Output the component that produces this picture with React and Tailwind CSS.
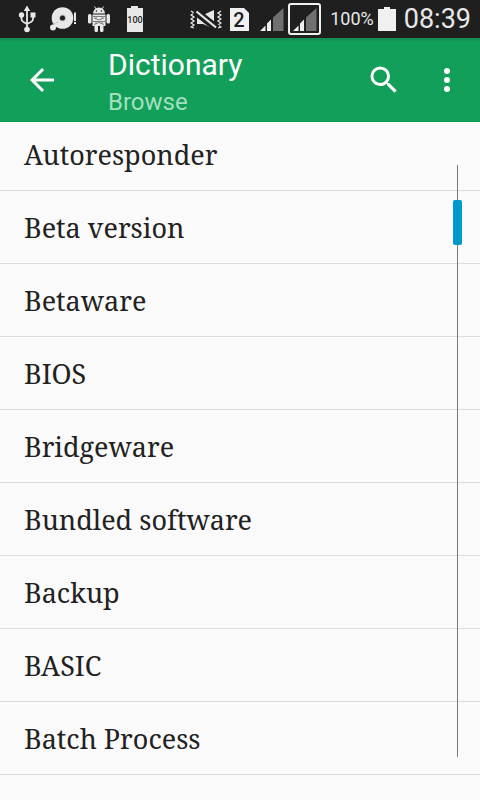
import React from "react";

const entries = [
  "Autoresponder",
  "Beta version",
  "Betaware",
  "BIOS",
  "Bridgeware",
  "Bundled software",
  "Backup",
  "BASIC",
  "Batch Process",
];

function UsbIcon() {
  return (
    <svg width="18" height="28" viewBox="0 0 18 28" fill="none" stroke="#e8e8e8" strokeWidth="1.8" aria-hidden="true">
      <path d="M9 5v18M3.500 11v3q0 2 2 3l3.500 2M15 11v3q0 2-2 3l-4 2" />
      <path d="M9 0.500l3.200 5.500h-6.400z" fill="#e8e8e8" stroke="none" />
      <circle cx="9" cy="24.500" r="2.800" fill="#e8e8e8" stroke="none" />
      <circle cx="3.500" cy="10" r="2.700" fill="#e8e8e8" stroke="none" />
      <path d="M12.500 7.500h5v5h-5z" fill="#e8e8e8" stroke="none" />
    </svg>
  );
}

function DiscIcon() {
  return (
    <svg width="28" height="24" viewBox="0 0 28 24" aria-hidden="true">
      <circle cx="12.500" cy="11" r="10.800" fill="#e8e8e8" />
      <circle cx="12.500" cy="11" r="3.500" fill="#c4c4c4" />
      <circle cx="12.500" cy="11" r="2.500" fill="#1f1f1f" />
      <path d="M0.500 20.500l7-5" stroke="#1f1f1f" strokeWidth="1.500" />
      <circle cx="3" cy="20.500" r="3" fill="#e8e8e8" />
      <path d="M3 20l5-4" stroke="#e8e8e8" strokeWidth="3" />
      <path d="M24 5.500h2v8.500h-2zM24 15h2v2h-2z" fill="#e8e8e8" />
    </svg>
  );
}

function AndroidIcon() {
  return (
    <svg width="22" height="26" viewBox="0 0 22 26" fill="#e8e8e8" aria-hidden="true">
      <path d="M5 7.500a6 6 0 0 1 12 0zM4.500 8.500h13V20h-13z" />
      <path d="M6.500 0.500l2 3M15.500 0.500l-2 3" stroke="#e8e8e8" />
      <rect x="0" y="8" width="3.500" height="9.500" rx="1.500" />
      <rect x="18.500" y="8" width="3.500" height="9.500" rx="1.500" />
      <rect x="6.500" y="18" width="3.500" height="8" rx="1.500" />
      <rect x="12" y="18" width="3.500" height="8" rx="1.500" />
      <path d="M5 10.500h12M6 12l5 2 5-2M5 15.500h12M6 18.500l5-2 5 2M8 10v3M14 10v3M8 15v3M14 15v3" fill="none" stroke="#808080" />
      <circle cx="8.500" cy="5" r="0.800" fill="#1f1f1f" />
      <circle cx="13.500" cy="5" r="0.800" fill="#1f1f1f" />
    </svg>
  );
}

function BatteryFullIcon() {
  return (
    <svg width="18" height="26" viewBox="0 0 18 26" aria-hidden="true">
      <path d="M5 0h7v2h5v24H1V2h4z" fill="#e8e8e8" />
      <text x="9" y="17" textAnchor="middle" fontSize="9" fontWeight="500" fill="#1f1f1f" className="font-['Roboto',sans-serif]">
        100
      </text>
    </svg>
  );
}

function VibrateIcon() {
  return (
    <svg width="32" height="22" viewBox="0 0 32 22" fill="none" stroke="#e8e8e8" aria-hidden="true">
      <path d="M1 3l3 2-3 2 3 2-3 2 3 2-3 2 3 2-3 2 3 1" strokeWidth="1.300" />
      <path d="M31 3l-3 2 3 2-3 2 3 2-3 2 3 2-3 2 3 2-3 1" strokeWidth="1.300" />
      <path d="M7 6v10h6l11 5V2l-11 5z" fill="#e8e8e8" stroke="none" />
      <path d="M5 3l22 17.500" stroke="#1f1f1f" strokeWidth="7.500" />
      <path d="M6.500 3.500l19.500 16" strokeWidth="2.200" />
    </svg>
  );
}

function SimIcon() {
  return (
    <svg width="19" height="24" viewBox="0 0 19 24" aria-hidden="true">
      <path d="M0 1h14l5 5v18H0z" fill="#f0f0f0" />
      <text x="9" y="20" textAnchor="middle" fontSize="20" fontWeight="500" fill="#1f1f1f" className="font-['Roboto',sans-serif]">
        2
      </text>
    </svg>
  );
}

function SignalIcon() {
  return (
    <svg width="24" height="24" viewBox="0 0 24 24" aria-hidden="true">
      <path d="M13 10.500L23.500 1v23H13z" fill="#707070" />
      <path d="M0 24l5.500-5.500V24zM7 24v-7.500l4-4V24z" fill="#f0f0f0" />
    </svg>
  );
}

function StatusBar() {
  return (
    <div className="flex h-[38px] shrink-0 items-center justify-between bg-[#1f1f1f] font-['Roboto',sans-serif] text-[#e8e8e8]">
      <div className="flex items-center gap-[14px] pl-[18px]">
        <UsbIcon />
        <div className="flex items-center gap-[10px]">
          <DiscIcon />
          <AndroidIcon />
        </div>
        <div className="pl-0.5">
          <BatteryFullIcon />
        </div>
      </div>
      <div className="flex items-center pr-[9px]">
        <VibrateIcon />
        <div className="ml-2">
          <SimIcon />
        </div>
        <div className="ml-[11px]">
          <SignalIcon />
        </div>
        <div className="ml-1 flex h-8 w-[33px] items-center justify-center rounded-[3px] border-2 border-[#f0f0f0]">
          <SignalIcon />
        </div>
        <span className="ml-[9px] text-lg leading-6">100%</span>
        <svg className="ml-1" width="18" height="24" viewBox="0 0 18 24" fill="#f0f0f0" aria-hidden="true">
          <path d="M6 0h6v2h6v22H0V2h6z" />
        </svg>
        <span className="ml-2 text-[27px] leading-8">08:39</span>
      </div>
    </div>
  );
}

function AppBar() {
  return (
    <header className="flex h-[84px] shrink-0 items-center bg-[#129f59] bg-linear-to-b from-[#168a52] from-0% to-[#129f59] to-5% font-['Roboto',sans-serif] text-white">
      <button type="button" aria-label="Back" className="flex w-[84px] justify-center">
        <svg width="36" height="36" viewBox="0 0 24 24" fill="currentColor" aria-hidden="true">
          <path d="M20 11H7.830l5.590-5.590L12 4l-8 8 8 8 1.410-1.410L7.830 13H20v-2z" />
        </svg>
      </button>
      <div className="min-w-0 flex-1 pt-1 pl-6">
        <h1 className="text-[30px] leading-10">Dictionary</h1>
        <p className="text-2xl leading-[34px] text-[#a3dfbf]">Browse</p>
      </div>
      <button type="button" aria-label="Search" className="flex w-[60px] justify-center">
        <svg width="36" height="36" viewBox="0 0 24 24" fill="currentColor" aria-hidden="true">
          <path d="M15.500 14h-.790l-.280-.270A6.471 6.471 0 0 0 16 9.500 6.500 6.500 0 1 0 9.500 16c1.610 0 3.090-.590 4.230-1.570l.270.280v.790l5 4.990L20.490 19l-4.990-5zm-6 0C7.010 14 5 11.990 5 9.500S7.010 5 9.500 5 14 7.010 14 9.500 11.990 14 9.500 14z" />
        </svg>
      </button>
      <button type="button" aria-label="More options" className="flex w-[66px] justify-center">
        <svg width="36" height="36" viewBox="0 0 24 24" fill="currentColor" aria-hidden="true">
          <circle cx="12" cy="6" r="2" />
          <circle cx="12" cy="12" r="2" />
          <circle cx="12" cy="18" r="2" />
        </svg>
      </button>
    </header>
  );
}

export default function App() {
  return (
    <div className="flex h-screen flex-col overflow-hidden bg-[#fafafa]">
      <StatusBar />
      <AppBar />
      <main className="relative min-h-0 flex-1 overflow-hidden">
        <ul className="-mt-1 font-['Noto_Serif','DejaVu_Serif_Condensed','DejaVu_Serif',serif] text-[27px] text-[#212121]">
          {entries.map((entry) => (
            <li key={entry} className="border-b border-[#dcdcdc]">
              <button type="button" className="block h-[72px] w-full px-6 pt-0.5 text-left">
                {entry}
              </button>
            </li>
          ))}
        </ul>
        <div className="absolute top-[43px] right-[18px] bottom-[43px] flex w-[9px] justify-center" aria-hidden="true">
          <div className="w-px bg-[#777777]" />
          <div className="absolute top-[35px] h-[45px] w-[9px] rounded-xs bg-[#0099cc]" />
        </div>
      </main>
    </div>
  );
}
